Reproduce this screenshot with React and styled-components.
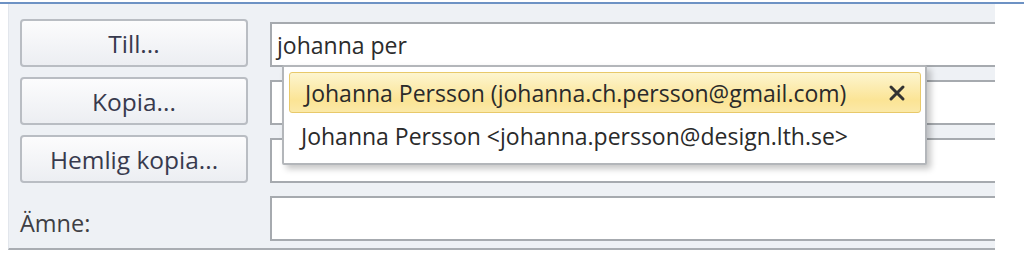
import styled, { createGlobalStyle } from "styled-components"

const GlobalStyle = createGlobalStyle`
  html, body {
    margin: 0;
    padding: 0;
    background: #ffffff;
    font-family: "Open Sans", "Noto Sans", "Liberation Sans", sans-serif;
  }
`

const suggestions = [
  { text: "Johanna Persson (johanna.ch.persson@gmail.com)", active: true },
  { text: "Johanna Persson <johanna.persson@design.lth.se>", active: false },
]

export default function App() {
  return (
    <>
      <GlobalStyle />
      <Window>
        <TopLine />
        <Panel>
          <FieldButton>Till...</FieldButton>
          <InputCell>
            <Field>johanna per</Field>
            <Dropdown>
              {suggestions.map((s) => (
                <Item key={s.text} $active={s.active}>
                  <span>{s.text}</span>
                  {s.active && (
                    <svg width="18" height="18" viewBox="0 0 18 18">
                      <path d="M3 3 L15 15 M15 3 L3 15" stroke="#333333" strokeWidth="3" strokeLinecap="round" />
                    </svg>
                  )}
                </Item>
              ))}
            </Dropdown>
          </InputCell>

          <FieldButton>Kopia...</FieldButton>
          <InputCell>
            <Field />
          </InputCell>

          <FieldButton>Hemlig kopia...</FieldButton>
          <InputCell>
            <Field />
          </InputCell>

          <Label>Ämne:</Label>
          <InputCell>
            <Field />
          </InputCell>
        </Panel>
      </Window>
    </>
  )
}

const Window = styled.div`
  width: 1024px;
  height: 261px;
  padding-top: 2px;
  box-sizing: border-box;
`
const TopLine = styled.div`
  height: 2px;
  background: #6d92c4;
`
const Panel = styled.div`
  margin-left: 8px;
  width: 987px;
  box-sizing: border-box;
  background: #eef1f5;
  border-left: 1px solid #e2e6ec;
  border-bottom: 2px solid #a9adb2;
  padding: 15px 0 7px 11px;
  display: grid;
  grid-template-columns: 228px 1fr;
  grid-auto-rows: 48px;
  column-gap: 22px;
  row-gap: 10px;
`
const FieldButton = styled.div`
  box-sizing: border-box;
  height: 48px;
  border: 2px solid #b9bdc3;
  border-radius: 4px;
  background: linear-gradient(#fcfcfd, #eceef2);
  display: flex;
  align-items: center;
  justify-content: center;
  font-size: 24.5px;
  color: #383a4e;
`
const Label = styled.div`
  display: flex;
  align-items: center;
  padding-top: 12px;
  font-size: 23.5px;
  color: #3e3e44;
`
const InputCell = styled.div`
  position: relative;
  padding-top: 3px;
`
const Field = styled.div`
  box-sizing: border-box;
  height: 45px;
  background: #ffffff;
  border: 2px solid #a6aaaf;
  border-right: none;
  display: flex;
  align-items: center;
  padding-left: 5px;
  font-size: 23px;
  color: #2c2c2c;
`
const Dropdown = styled.div`
  position: absolute;
  left: 12px;
  top: 46px;
  width: 645px;
  box-sizing: border-box;
  background: #ffffff;
  border: 2px solid #b3b6ba;
  border-radius: 2px;
  box-shadow: 4px 4px 6px rgba(0, 0, 0, 0.22);
  padding: 5px 4px 4px 5px;
  z-index: 2;
`
const Item = styled.div`
  box-sizing: border-box;
  height: ${(p) => (p.$active ? "41px" : "46px")};
  display: flex;
  align-items: center;
  justify-content: space-between;
  padding: 0 14px 0 ${(p) => (p.$active ? "15px" : "11px")};
  font-size: 23px;
  color: #2a2a2a;
  border-radius: 3px;
  border: 1px solid ${(p) => (p.$active ? "#e8c96a" : "transparent")};
  background: ${(p) => (p.$active ? "linear-gradient(#fdf5cf, #fbe495 70%, #fbe9a8)" : "transparent")};
`
